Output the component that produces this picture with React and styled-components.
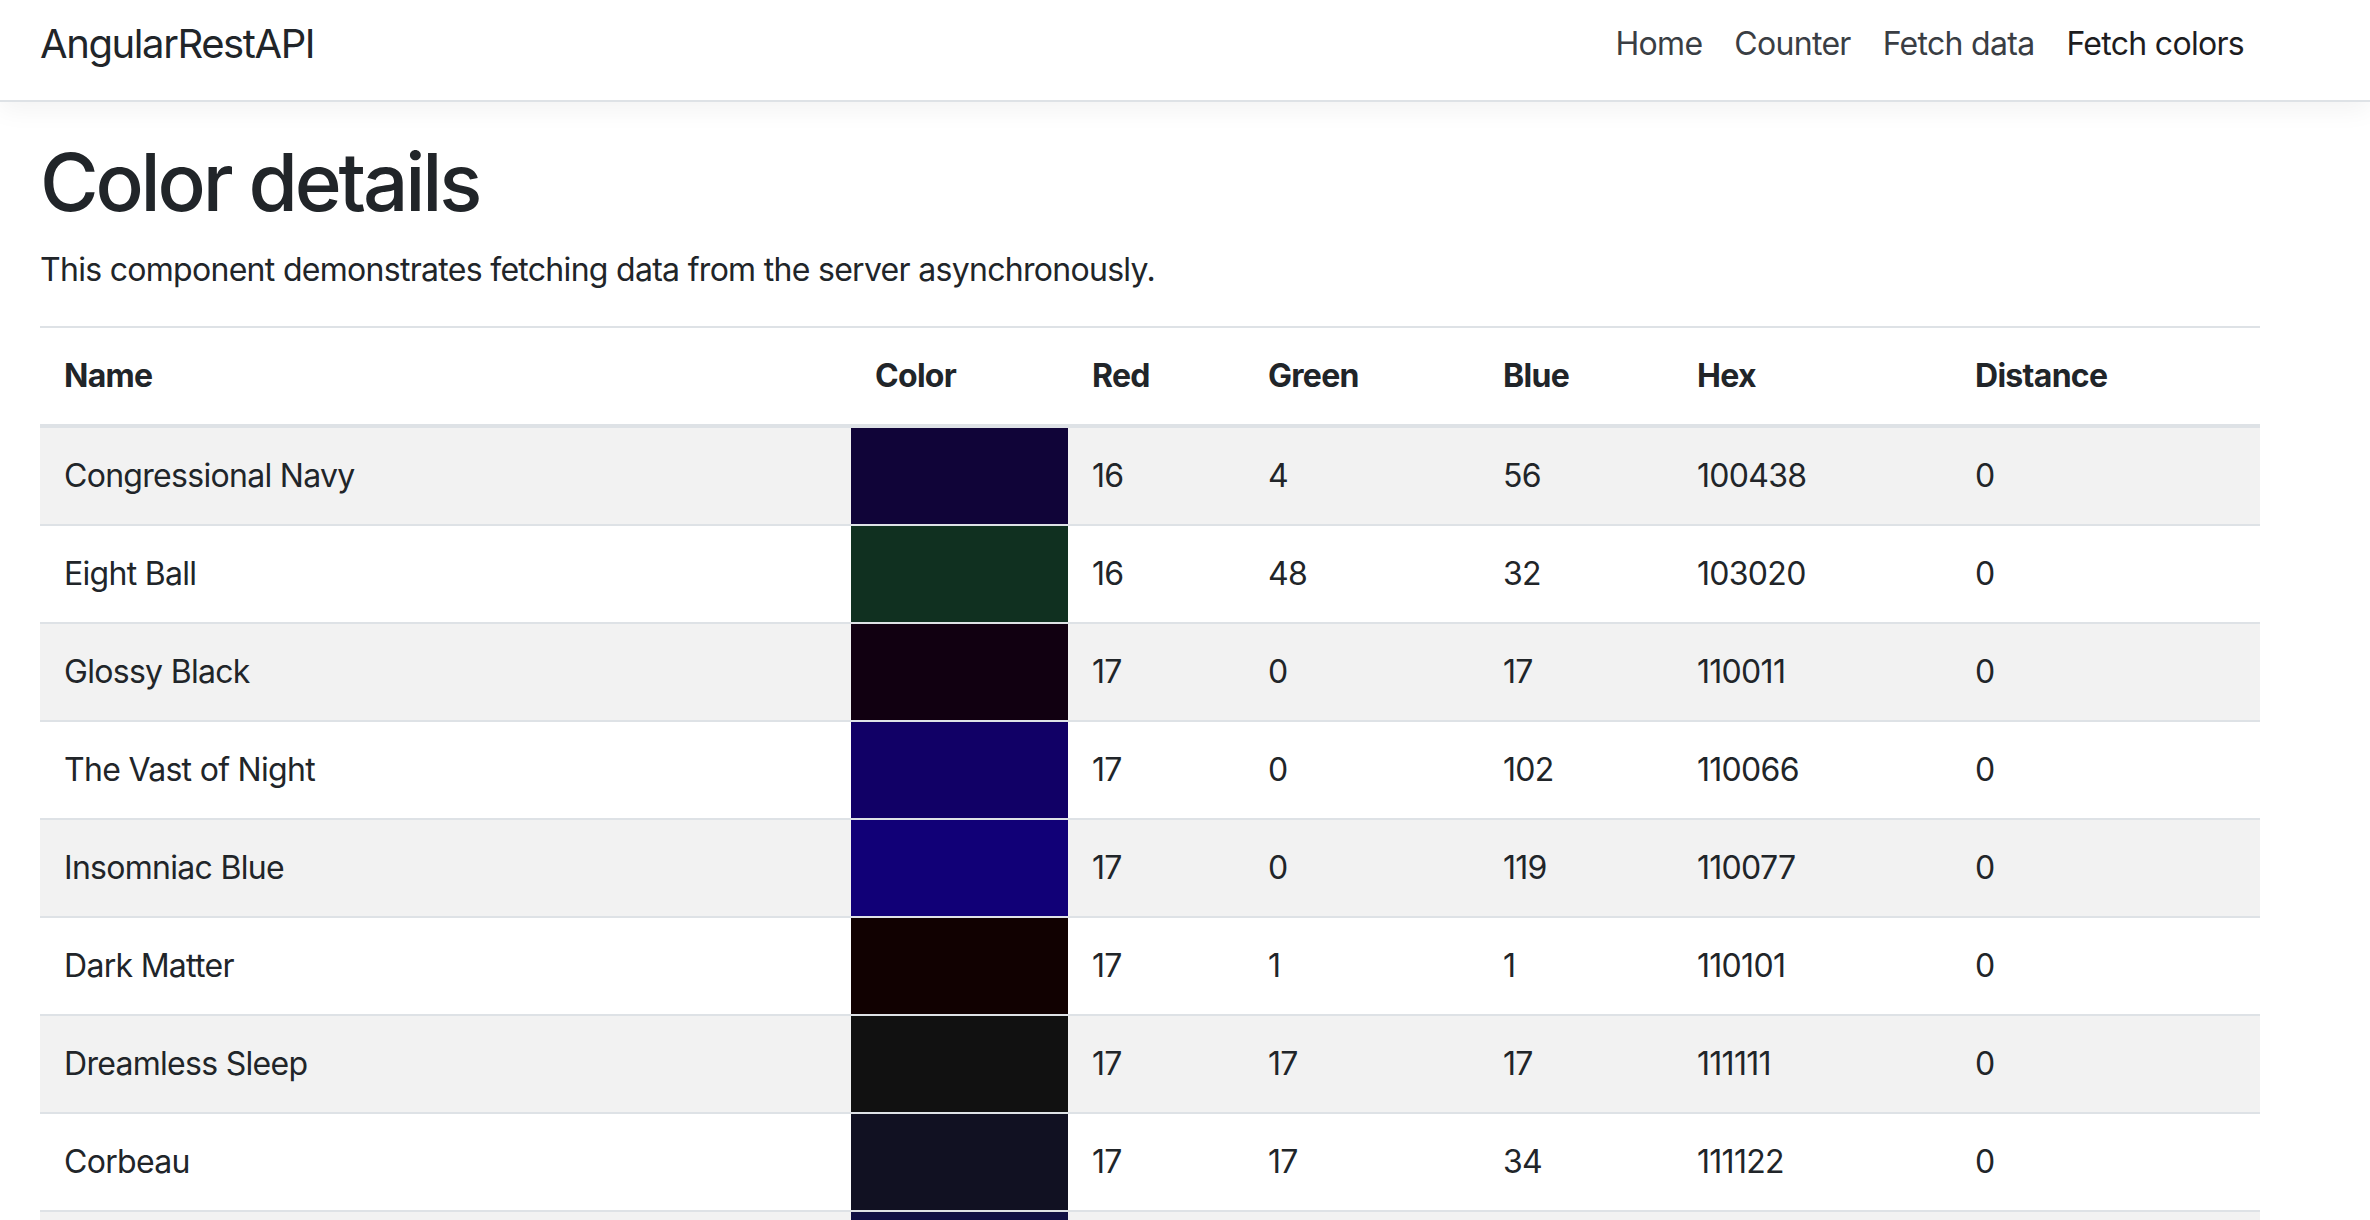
import React from 'react'
import styled, { createGlobalStyle } from 'styled-components'

const GlobalStyle = createGlobalStyle`
  html, body {
    margin: 0;
    padding: 0;
    background: #fff;
  }
  body {
    font-family: "Inter", "Liberation Sans", sans-serif;
    font-size: 32px;
    line-height: 1.5;
    letter-spacing: -0.022em;
    color: #212529;
  }
  * { box-sizing: border-box; }
`;

const Navbar = styled.header`
  height: 102px;
  padding: 0 110px 12px 40px;
  display: flex;
  align-items: center;
  justify-content: space-between;
  border-bottom: 2px solid #dee2e6;
  box-shadow: 0 8px 24px rgba(0, 0, 0, 0.05);
  background: #fff;
`;

const Brand = styled.a`
  font-size: 40px;
  line-height: 60px;
  letter-spacing: -0.035em;
  color: #212529;
  text-decoration: none;
  white-space: nowrap;
`;

const NavList = styled.nav`
  display: flex;
  align-items: center;
`;

const NavLink = styled.a`
  padding: 0 16px;
  font-size: 32px;
  line-height: 48px;
  color: ${p => (p.$active ? '#1d1d1f' : '#3a3e44')};
  text-decoration: none;
  white-space: nowrap;
`;

const Main = styled.main`
  padding: 32px 0 0 40px;
  width: 2260px;
`;

const Title = styled.h1`
  margin: 0 0 16px;
  font-size: 80px;
  font-weight: 500;
  line-height: 96px;
  letter-spacing: -0.04em;
  color: #212529;
`;

const Lead = styled.p`
  margin: 0 0 32px;
  font-size: 32px;
  line-height: 48px;
`;

const Table = styled.table`
  width: 2220px;
  table-layout: fixed;
  border-collapse: collapse;
  color: #212529;
`;

const HeadCell = styled.th`
  padding: 24px;
  text-align: left;
  vertical-align: bottom;
  font-weight: 700;
  line-height: 48px;
  border-top: 2px solid #dee2e6;
  border-bottom: 4px solid #dee2e6;
`;

const Row = styled.tr`
  background: ${p => (p.$striped ? '#f2f2f2' : '#fff')};
`;

const Cell = styled.td`
  padding: 24px;
  line-height: 48px;
  vertical-align: top;
  border-top: 2px solid #dee2e6;
  white-space: nowrap;
`;

const Swatch = styled(Cell)`
  background: ${p => p.$color};
`;

const columns = [
  { label: 'Name', width: 811 },
  { label: 'Color', width: 217 },
  { label: 'Red', width: 176 },
  { label: 'Green', width: 235 },
  { label: 'Blue', width: 194 },
  { label: 'Hex', width: 278 },
  { label: 'Distance', width: 309 },
]

const colors = [
  { name: 'Congressional Navy', r: 16, g: 4, b: 56, hex: '100438' },
  { name: 'Eight Ball', r: 16, g: 48, b: 32, hex: '103020' },
  { name: 'Glossy Black', r: 17, g: 0, b: 17, hex: '110011' },
  { name: 'The Vast of Night', r: 17, g: 0, b: 102, hex: '110066' },
  { name: 'Insomniac Blue', r: 17, g: 0, b: 119, hex: '110077' },
  { name: 'Dark Matter', r: 17, g: 1, b: 1, hex: '110101' },
  { name: 'Dreamless Sleep', r: 17, g: 17, b: 17, hex: '111111' },
  { name: 'Corbeau', r: 17, g: 17, b: 34, hex: '111122' },
  { name: 'Black Pearl', r: 17, g: 17, b: 68, hex: '111144' },
]

export default function App() {
  return (
    <>
      <GlobalStyle />
      <Navbar>
        <Brand href="#">AngularRestAPI</Brand>
        <NavList>
          <NavLink href="#">Home</NavLink>
          <NavLink href="#">Counter</NavLink>
          <NavLink href="#">Fetch data</NavLink>
          <NavLink href="#" $active>Fetch colors</NavLink>
        </NavList>
      </Navbar>
      <Main>
        <Title>Color details</Title>
        <Lead>This component demonstrates fetching data from the server asynchronously.</Lead>
        <Table>
          <colgroup>
            {columns.map(c => <col key={c.label} width={c.width} />)}
          </colgroup>
          <thead>
            <tr>
              {columns.map(c => <HeadCell key={c.label}>{c.label}</HeadCell>)}
            </tr>
          </thead>
          <tbody>
            {colors.map((c, i) => (
              <Row key={c.hex} $striped={i % 2 === 0}>
                <Cell>{c.name}</Cell>
                <Swatch $color={'#' + c.hex} />
                <Cell>{c.r}</Cell>
                <Cell>{c.g}</Cell>
                <Cell>{c.b}</Cell>
                <Cell>{c.hex}</Cell>
                <Cell>0</Cell>
              </Row>
            ))}
          </tbody>
        </Table>
      </Main>
    </>
  )
}
